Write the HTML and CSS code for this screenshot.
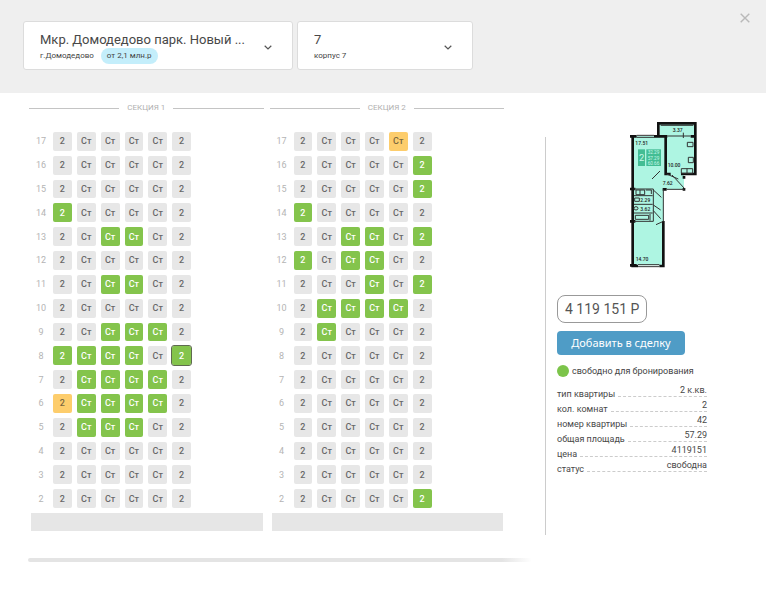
FILE: index.html
```html
<!DOCTYPE html>
<html lang="ru">
<head>
<meta charset="utf-8">
<meta name="viewport" content="width=device-width, initial-scale=1">
<title>Шахматка квартир</title>
<link rel="stylesheet" href="styles.css">
</head>
<body>
<header class="topbar">
  <div class="picker picker-complex">
    <div class="picker-body">
      <select class="picker-select" id="complex" aria-label="Жилой комплекс">
        <option>Мкр. Домодедово парк. Новый ...</option>
      </select>
      <div class="picker-sub"><label for="complex">г.Домодедово</label><span class="pill">от 2,1 млн.р</span></div>
    </div>
    <svg class="chevron" viewBox="0 0 8 5" aria-hidden="true"><path d="M.7.7 4 3.9 7.3.7"/></svg>
  </div>
  <div class="picker picker-building">
    <div class="picker-body">
      <select class="picker-select" id="building" aria-label="Корпус">
        <option>7</option>
      </select>
      <div class="picker-sub"><label for="building">корпус 7</label></div>
    </div>
    <svg class="chevron" viewBox="0 0 8 5" aria-hidden="true"><path d="M.7.7 4 3.9 7.3.7"/></svg>
  </div>
  <button class="close" type="button" aria-label="Закрыть">
    <svg viewBox="0 0 10 10" aria-hidden="true"><path d="M.7.7 9.3 9.3M9.3.7.7 9.3"/></svg>
  </button>
</header>

<main class="content">
  <div class="board">
    <div class="sections">
      <section class="section">
        <h2 class="section-title">СЕКЦИЯ 1</h2>
        <div class="floors" id="section-1"></div>
        <div class="ground"></div>
      </section>
      <section class="section">
        <h2 class="section-title">СЕКЦИЯ 2</h2>
        <div class="floors" id="section-2"></div>
        <div class="ground"></div>
      </section>
    </div>
    <div class="scroll-track"></div>
  </div>

  <aside class="details">
    <svg class="plan" viewBox="54 33 216 444" role="img" aria-label="План квартиры">
      <g fill="#aef5e2">
        <path d="M67 78H148V40H256V190H222V238H160V466H67Z"/>
      </g>
      <g fill="none" stroke="#111" stroke-width="8">
        <path d="M145 80V40H256V192H213"/>
        <path d="M68 76V468H84M148 468H160V333M60 79H80M132 79H172M242 79H258M167 79V192H182"/>
        <path d="M60 237H76M60 334H76M158 238H170M222 198V206M222 234V242M60 466H80"/>
      </g>
      <g fill="none" stroke="#333" stroke-width="3">
        <path d="M152 46H250M80 76H132M80 82H132M172 78H242M84 464H148M84 470H148"/>
        <path d="M72 237H130V334H72M72 257H128M72 283H128M72 309H128M170 238H222M160 238V334"/>
        <path d="M150 183 126 207M170 192 205 207M186 195 224 236M130 240 154 262M130 285 152 300M130 302 152 326M138 344 160 334"/>
        <path d="M232 97H249V110H232ZM235 142H250V158H235ZM214 176H248V190H214ZM231 176V190M78 240H104V254H78ZM90 240V254M74 264H88V274H74ZM76 316H116V328H76ZM120 312V332M108 240H124V252"/>
        <ellipse cx="78" cy="295" rx="6" ry="5"/>
        <path d="M220 68V84"/>
      </g>
      <g fill="#43bd94"><rect x="84" y="118" width="21" height="50"/><rect x="109" y="118" width="44" height="50"/></g>
      <g class="plan-badge"><text x="87" y="152" font-size="28">2</text><text x="113" y="133" font-size="14">32.29</text><text x="113" y="149" font-size="14">57.29</text><text x="113" y="165" font-size="14">60.66</text></g>
      <g class="plan-text"><text x="76" y="104">17.51</text><text x="188" y="67">3.37</text><text x="173" y="172">10.00</text><text x="158" y="224">7.62</text><text x="91" y="275">2.29</text><text x="91" y="302">3.62</text><text x="77" y="452">14.70</text></g>
    </svg>
    <div class="price">4 119 151 Р</div>
    <button class="add" type="button">Добавить в сделку</button>
    <div class="status"><span class="dot"></span>свободно для бронирования</div>
    <dl class="props">
      <div class="prop"><dt>тип квартиры</dt><dd>2 к.кв.</dd></div>
      <div class="prop"><dt>кол. комнат</dt><dd>2</dd></div>
      <div class="prop"><dt>номер квартиры</dt><dd>42</dd></div>
      <div class="prop"><dt>общая площадь</dt><dd>57.29</dd></div>
      <div class="prop"><dt>цена</dt><dd>4119151</dd></div>
      <div class="prop"><dt>статус</dt><dd>свободна</dd></div>
    </dl>
  </aside>
</main>
<script src="app.js"></script>
</body>
</html>
```
FILE: styles.css
```css
* { box-sizing: border-box; }

body {
  margin: 0;
  background: #fff;
  color: #555;
  font: 9px/12px Roboto, "Liberation Sans", sans-serif;
}

button { font: inherit; border: 0; padding: 0; cursor: pointer; }

.topbar {
  display: flex;
  align-items: flex-start;
  gap: 4px;
  margin-right: 2px;
  padding: 21px 16px 23px 23px;
  background: #efefef;
}

.picker {
  display: flex;
  align-items: center;
  justify-content: space-between;
  padding: 9px 20px 5px 16px;
  border: 1px solid #dcdcdc;
  border-radius: 3px;
  background: #fff;
}
.picker-complex { flex: 0 1 270px; }
.picker-building { flex: 0 1 176px; }
.picker-body { flex: 1; min-width: 0; }

.picker-select {
  display: block;
  width: 100%;
  height: 17px;
  padding: 0;
  border: 0;
  appearance: none;
  background: none;
  color: #484848;
  font: 13px/17px Roboto, "Liberation Sans", sans-serif;
}

.picker-sub {
  display: flex;
  align-items: center;
  gap: 7px;
  height: 16px;
  color: #444;
  font-size: 8px;
}
.pill {
  padding: 2px 6px;
  border-radius: 8px;
  background: #c4eefb;
}

.chevron {
  flex: none;
  width: 8px;
  height: 5px;
  fill: none;
  stroke: #555;
  stroke-width: 1.2;
}

.close {
  display: flex;
  margin: -8px 0 0 auto;
  background: none;
}
.close svg { width: 10px; height: 10px; stroke: #b9b9b9; stroke-width: 1.4; }

.content {
  display: flex;
  align-items: flex-start;
  padding: 9px 61px 0 28px;
}

.board { flex: 1; }
.sections { display: flex; gap: 6px; padding: 0 41px 0 1px; }
.section { flex: 1; }

.section-title {
  display: flex;
  align-items: center;
  gap: 8px;
  margin: 0;
  color: #b0b0b0;
  font-size: 8px;
  font-weight: 400;
  line-height: 12px;
}
.section-title::before,
.section-title::after {
  content: "";
  flex: 1;
  border-top: 1px solid #c4c4c4;
}

.floors {
  display: grid;
  grid-template-rows: repeat(16, 1fr);
  gap: 5px;
  height: 376px;
  margin-top: 18px;
}
.floor {
  display: grid;
  grid-template-columns: 24px 138px;
  align-items: stretch;
}
.floor-number { align-self: center; color: #b4b4b4; text-align: center; }
.flats { display: grid; grid-template-columns: repeat(6, 1fr); gap: 5px; }

.flat {
  border-radius: 2px;
  background: #e7e7e7;
  color: #686868;
  font-size: 9px;
  font-weight: 500;
  line-height: 12px;
}
.flat-free { background: #84c44c; color: #fff; }
.flat-held { background: #fdcd6c; color: #7a6840; }
.flat-selected { outline: 1px solid #5f6b50; }

.ground { height: 18px; margin: 5px 1px 0 2px; background: #e6e6e6; }

.scroll-track {
  height: 4px;
  margin: 27px 13px 0 0;
  border-radius: 2px;
  background: linear-gradient(90deg, #e4e4e4 94%, #fff);
}

.details {
  flex: 0 0 162px;
  margin-top: 35px;
  padding-left: 11px;
  border-left: 1px solid #ccc;
  height: 398px;
}

.plan { display: block; width: 72px; height: 148px; margin: -16px auto 26px 71px; }
.plan-text { fill: #222; font: 500 15px Roboto, sans-serif; }
.plan-badge { fill: #c9f8ea; font-family: Roboto, sans-serif; }

.price {
  width: fit-content;
  padding: 0 7px;
  border: 1px solid #999;
  border-radius: 8px;
  font-size: 14px;
  line-height: 26px;
}

.add {
  display: block;
  width: 128px;
  height: 24px;
  margin-top: 8px;
  border-radius: 4px;
  background: #4f9cc6;
  color: #fff;
  font: 11px/24px "Noto Sans", sans-serif;
}

.status { display: flex; align-items: center; gap: 3px; margin-top: 10px; color: #444; white-space: nowrap; }
.dot { width: 12px; height: 12px; border-radius: 50%; background: #7cc44a; }

.props { margin: 7px 0 0; color: #484848; }
.prop { display: flex; align-items: flex-start; height: 15px; }
.prop dt { padding: 4px 3px 0 0; }
.prop dd { flex: 1; margin: 0; border-bottom: 1px dashed #ccc; text-align: right; }
```
FILE: app.js
```js
// One string per floor, top floor (17) first: "." sold, "g" free, "o" on hold, "s" selected.
const sections = {
  "section-1": ["......", "......", "......", "g.....", "..gg..", "......", "..gg..", "......",
                "..ggg.", "gggg.s", ".gggg.", "ogggg.", ".ggg..", "......", "......", "......"],
  "section-2": ["....o.", ".....g", ".....g", "g.....", "..gg.g", "g.gg..", "...g.g", ".gggg.",
                ".g....", "......", "......", "......", "......", "......", "......", ".....g"]
};
const states = { ".": "", g: " flat-free", o: " flat-held", s: " flat-free flat-selected" };

for (const [id, floors] of Object.entries(sections)) {
  document.getElementById(id).innerHTML = floors.map((floor, row) => {
    const flats = [...floor].map((state, i) =>
      `<button type="button" class="flat${states[state]}">${i === 0 || i === 5 ? "2" : "Ст"}</button>`).join("");
    return `<div class="floor"><span class="floor-number">${17 - row}</span><div class="flats">${flats}</div></div>`;
  }).join("");
}
```
